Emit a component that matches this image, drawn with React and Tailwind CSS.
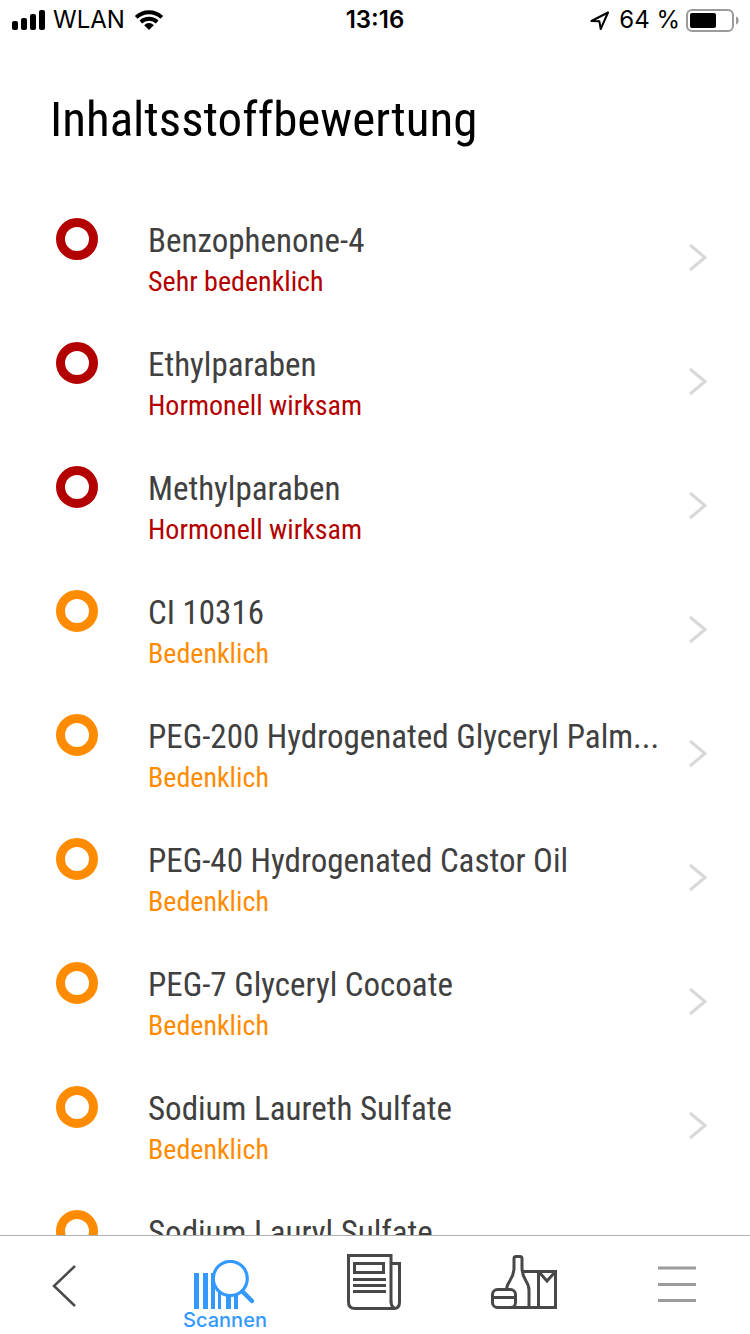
import React from "react"
import clsx from "clsx"

const ingredients = [
  { name: "Benzophenone-4", rating: "Sehr bedenklich", level: "high" },
  { name: "Ethylparaben", rating: "Hormonell wirksam", level: "high" },
  { name: "Methylparaben", rating: "Hormonell wirksam", level: "high" },
  { name: "CI 10316", rating: "Bedenklich", level: "medium" },
  { name: "PEG-200 Hydrogenated Glyceryl Palm...", rating: "Bedenklich", level: "medium" },
  { name: "PEG-40 Hydrogenated Castor Oil", rating: "Bedenklich", level: "medium" },
  { name: "PEG-7 Glyceryl Cocoate", rating: "Bedenklich", level: "medium" },
  { name: "Sodium Laureth Sulfate", rating: "Bedenklich", level: "medium" },
  { name: "Sodium Lauryl Sulfate", rating: "Bedenklich", level: "medium" },
]

function StatusBar() {
  return (
    <header className="grid h-10 shrink-0 grid-cols-3 items-center px-3 font-['Inter',sans-serif] text-2xl text-black">
      <div className="flex items-center gap-2">
        <svg className="h-5 w-[33px]" viewBox="0 0 33 20" fill="currentColor" aria-hidden="true">
          <rect x="0" y="11" width="6" height="9" rx="2" />
          <rect x="9" y="8" width="6" height="12" rx="2" />
          <rect x="18" y="4" width="6" height="16" rx="2" />
          <rect x="27" y="0" width="6" height="20" rx="2" />
        </svg>
        <span>WLAN</span>
        <svg className="h-5 w-8" viewBox="-2 0 32 20" fill="none" stroke="currentColor" aria-hidden="true">
          <path d="M1.2 7.4 A18.4 18.4 0 0 1 26.8 7.4" strokeWidth="4" />
          <path d="M5.8 12 A12 12 0 0 1 22.2 12" strokeWidth="3.8" />
          <path d="M9.2 15.200 A6.5 6.5 0 0 1 18.8 15.200 L14 20 Z" fill="currentColor" stroke="none" />
        </svg>
      </div>
      <time className="text-center font-semibold">13:16</time>
      <div className="flex items-center justify-end gap-1.5">
        <svg className="h-5 w-6" viewBox="0 0 24 20" fill="none" stroke="currentColor" strokeWidth="2" strokeLinejoin="round" aria-hidden="true">
          <path d="M19 2.500 L2.500 11 L10.400 11.300 L11.700 19 Z" />
        </svg>
        <span className="whitespace-nowrap">64 %</span>
        <svg className="-mr-0.5 h-6 w-[54px]" viewBox="0 0 54 24" aria-hidden="true">
          <rect x="1" y="2" width="46" height="21" rx="5" fill="none" stroke="#9b9b9b" strokeWidth="2" />
          <rect x="4" y="5" width="26" height="15" rx="2" />
          <path d="M50 8.500 C53.600 9.500 53.600 15.500 50 16.500 Z" fill="#9b9b9b" />
        </svg>
      </div>
    </header>
  )
}

function Ingredient({ name, rating, level }) {
  const high = level === "high"
  return (
    <li>
      <a href="#" className="flex h-[124px] items-start pr-10 pl-14">
        <span
          className={clsx(
            "size-[42px] shrink-0 rounded-full border-[9px]",
            high ? "border-[#b30000]" : "border-[#ff8c00]"
          )}
        />
        <span className="ml-[50px] min-w-0 flex-1">
          <span className="block truncate text-[33px] leading-[46px] text-[#404040]">{name}</span>
          <span className={clsx("block text-[28px] leading-9", high ? "text-[#b30000]" : "text-[#ff8c00]")}>
            {rating}
          </span>
        </span>
        <svg className="mt-6 h-8 w-6 shrink-0" viewBox="0 0 24 32" fill="none" stroke="#d8d8d8" strokeWidth="3" aria-hidden="true">
          <path d="M4 3 L19 15.500 L4 28" />
        </svg>
      </a>
    </li>
  )
}

function ScanIcon() {
  return (
    <svg className="h-[50px] w-[62px]" viewBox="0 0 62 50" fill="none" aria-hidden="true">
      <g fill="#3399ff">
        <rect x="0" y="13" width="5" height="36" />
        <rect x="9" y="13" width="5" height="36" />
        <rect x="17" y="13" width="4" height="36" />
        <rect x="24" y="28" width="3" height="21" />
        <rect x="32" y="33" width="5" height="16" />
        <rect x="40" y="32" width="4" height="17" />
      </g>
      <circle cx="36.300" cy="18.500" r="17" fill="#fff" stroke="#3399ff" strokeWidth="3.200" />
      <path d="M48.500 31.500 L58 41" stroke="#3399ff" strokeWidth="4.500" strokeLinecap="round" />
    </svg>
  )
}

function TabBar() {
  return (
    <nav className="grid h-[99px] shrink-0 grid-cols-5 border-t border-[#b0b0b0] bg-white">
      <button type="button" aria-label="Zurück" className="flex items-start justify-center pt-7 pr-6">
        <svg className="h-11 w-7" viewBox="0 0 28 44" fill="none" stroke="#4a4a4a" strokeWidth="2.500">
          <path d="M26 2 L5 22 L26 42" />
        </svg>
      </button>
      <button type="button" className="flex flex-col items-center pt-6 font-['Inter',sans-serif] text-xl leading-5 font-medium text-[#3399ff]">
        <ScanIcon />
        <span>Scannen</span>
      </button>
      <button type="button" aria-label="Magazin" className="flex items-start justify-center pt-[18px] pr-0.5">
        <svg className="h-14 w-[54px]" viewBox="0 0 54 56" fill="none" stroke="#484848" strokeWidth="3">
          <path d="M44 48 V1.500 H1.500 V48 Q1.500 54.500 8 54.500 H47 Q52.500 54.500 52.500 48 V9.500 H44" />
          <path d="M44 47 Q44 53 48 54.500" />
          <rect x="7.500" y="9.500" width="29" height="9" />
          <path d="M6 25.500 H39 M6 31.500 H39 M6 37.500 H39" />
        </svg>
      </button>
      <button type="button" aria-label="Produkte" className="flex items-start justify-center pt-[18px] pr-0.5">
        <svg className="h-14 w-[66px]" viewBox="0 0 66 56" fill="none" stroke="#484848" strokeWidth="3">
          <path d="M15.500 36 C15.500 27 23 26 23 14 V4.500 Q23 2.500 25 2.500 H29 Q31 2.500 31 4.500 V14 C31 26 38 27 38 36 V53" />
          <rect x="1.500" y="35.500" width="23" height="18" rx="5" />
          <path d="M2 43.500 H24 M20 53.500 H64.500 V17.500 H32 M47.500 17 V53" />
          <path d="M48 18 L56 27 L64 18" />
        </svg>
      </button>
      <button type="button" aria-label="Menü" className="flex items-start justify-center pt-[30px]">
        <svg className="ml-1 h-9 w-[38px]" viewBox="0 0 38 36" stroke="#9b9b9b" strokeWidth="3">
          <path d="M0 2 H38 M0 18.500 H38 M0 34.500 H38" />
        </svg>
      </button>
    </nav>
  )
}

export default function App() {
  return (
    <div className="flex h-screen flex-col overflow-hidden bg-white font-['Roboto_Condensed','Arial_Narrow',sans-serif]">
      <StatusBar />
      <main className="min-h-0 flex-1 overflow-hidden">
        <h1 className="px-[50px] pt-[50px] text-[49px] leading-[60px] text-black">Inhaltsstoffbewertung</h1>
        <ul className="pt-[68px]">
          {ingredients.map((item) => (
            <Ingredient key={item.name} {...item} />
          ))}
        </ul>
      </main>
      <TabBar />
    </div>
  )
}
